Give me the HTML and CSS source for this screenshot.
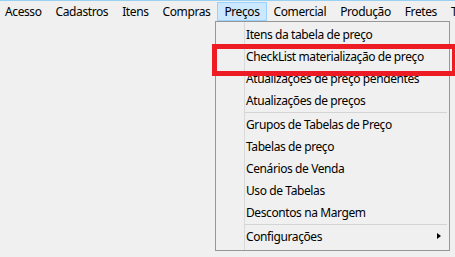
FILE: index.html
```html
<!DOCTYPE html>
<html lang="pt-BR">
<head>
    <meta charset="UTF-8">
    <meta name="viewport" content="width=device-width, initial-scale=1.0">
    <title>Menu Preços</title>
    <link rel="stylesheet" href="styles.css">
</head>
<body>
    <div class="menubar">
        <ul class="menu-top">
            <li>Acesso</li>
            <li>Cadastros</li>
            <li>Itens</li>
            <li>Compras</li>
            <li class="open">Preços</li>
            <li>Comercial</li>
            <li>Produção</li>
            <li>Fretes</li>
            <li>Tarefas</li>
        </ul>
    </div>

    <ul class="dropdown">
        <li>Itens da tabela de preço</li>
        <li>CheckList materialização de preço</li>
        <li>Atualizações de preço pendentes</li>
        <li>Atualizações de preços</li>
        <li class="sep"></li>
        <li>Grupos de Tabelas de Preço</li>
        <li>Tabelas de preço</li>
        <li>Cenários de Venda</li>
        <li>Uso de Tabelas</li>
        <li>Descontos na Margem</li>
        <li class="sep"></li>
        <li class="sub">Configurações</li>
    </ul>

    <!-- marcação em vermelho sobre o item -->
    <div class="highlight-box"></div>
</body>
</html>
```

FILE: styles.css
```css
body {
    margin: 0;
    width: 455px;
    height: 257px;
    overflow: hidden;
    position: relative;
    background-color: #f0f0f0;
    color: #000;
    font-family: "Segoe UI", "Noto Sans", sans-serif;
    font-size: 12px;
    letter-spacing: -0.4px;
}
ul {
    list-style: none;
    margin: 0;
    padding: 0;
}
.menubar {
    border-top: 1px solid #99d1f3;
    padding-top: 1px;
    height: 19px;
}
.menu-top {
    display: flex;
    margin-left: -2px;
    white-space: nowrap;
}
.menu-top li {
    box-sizing: border-box;
    height: 19px;
    padding: 1px 6px 0;
    line-height: 16px;
    border: 1px solid transparent;
}
.menu-top li.open {
    background-color: #cce8ff;
    border-color: #99d1ff;
}
.dropdown {
    position: absolute;
    left: 215px;
    top: 21px;
    width: 235px;
    box-sizing: border-box;
    padding: 1px 2px 3px;
    border: 1px solid #979797;
    background-color: #f0f0f0;
    background-image: linear-gradient(to right, transparent 28px, #d9d9d9 28px, #d9d9d9 29px, transparent 29px);
}
.dropdown li {
    height: 21px;
    padding: 1px 0 0 28px;
    line-height: 21px;
    white-space: nowrap;
    position: relative;
}
.dropdown li.sep {
    height: 1px;
    margin: 1px 0 0 27px;
    padding: 0;
    background-color: #d4d4d4;
}
.dropdown li.sub::after {
    content: "";
    position: absolute;
    right: 6px;
    top: 8px;
    border-left: 4px solid #000;
    border-top: 3.5px solid transparent;
    border-bottom: 3.5px solid transparent;
}
.highlight-box {
    position: absolute;
    left: 212px;
    top: 44px;
    width: 245px;
    height: 32px;
    box-sizing: border-box;
    border: 5px solid #ed1c24;
}
```
